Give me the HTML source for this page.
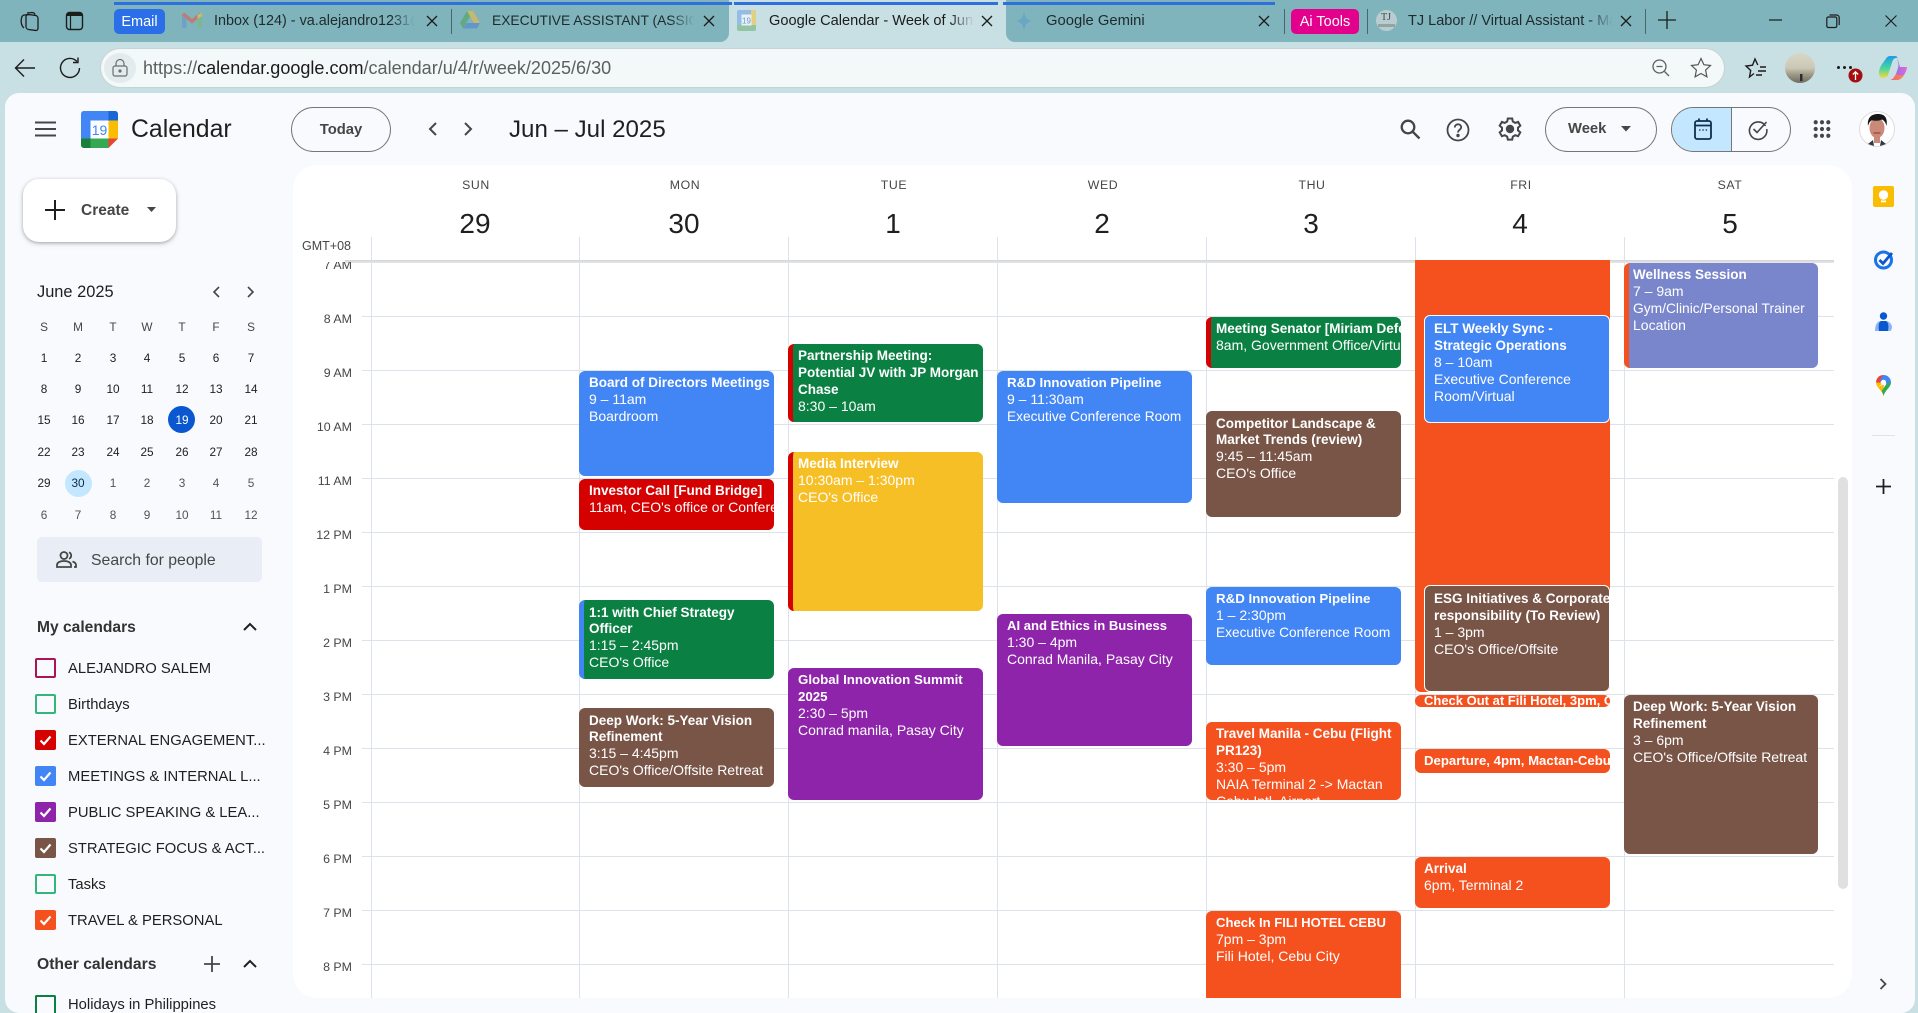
<!DOCTYPE html>
<html><head><meta charset="utf-8"><title>Google Calendar</title>
<style>
*{box-sizing:border-box}
html,body{margin:0;padding:0;width:1918px;height:1013px;overflow:hidden}
body{position:relative;background:#c8dfe3;font-family:"Liberation Sans",sans-serif;color:#1f1f1f}
.a{position:absolute;white-space:nowrap}
svg{position:absolute;overflow:visible}
.tab{font-size:14.8px;color:#1f2a2c;top:12px;line-height:18px;overflow:hidden}
.fade{-webkit-mask-image:linear-gradient(90deg,#000 88%,transparent);mask-image:linear-gradient(90deg,#000 88%,transparent)}
.sep{position:absolute;top:9px;width:1px;height:25px;background:#48666c}
.dow{position:absolute;top:178px;width:100px;text-align:center;font-size:12.3px;letter-spacing:.6px;color:#444746;line-height:15px}
.num{position:absolute;top:207px;width:100px;text-align:center;font-size:28px;color:#1f1f1f;line-height:34px}
.h{position:absolute;left:362px;width:1472px;height:1px;background:#dde3ea}
.v{position:absolute;top:237px;width:1px;height:761px;background:#dde3ea}
.tl{position:absolute;left:300px;width:52px;text-align:right;font-size:12.4px;color:#444746;line-height:14px}
.e{position:absolute;border-radius:6px;color:#fff;font-size:14px;line-height:17px;padding:3px 0 0 10px;white-space:nowrap;overflow:hidden}
.e b{display:block;font-size:13.5px;font-weight:bold}
.s{padding-top:5px}
.s b{line-height:16px}
.m{position:absolute;width:34px;text-align:center;font-size:11.8px;line-height:14px;color:#1f1f1f}
.g{color:#50535a}
.d{color:#444746;font-weight:normal;font-size:11.8px}
.li{position:absolute;left:68px;font-size:14.8px;line-height:18px;color:#1f1f1f;white-space:nowrap}
.cb{position:absolute;left:35px;width:21px;height:20px;border-radius:2px;border:2px solid}
.cb svg{left:0;top:0}
.pill{position:absolute;top:107px;height:45px;border:1px solid #747775;border-radius:23px}
</style></head>
<body>
<!-- tab strip -->
<div class="a" style="left:0;top:0;width:729px;height:42px;background:#7fb4bd;border-radius:0 0 9px 0"></div>
<div class="a" style="left:1006px;top:0;width:912px;height:42px;background:#7fb4bd;border-radius:0 0 0 9px"></div>
<div class="a" style="left:114px;top:2px;width:618px;height:3px;background:#2f6fdc"></div>
<div class="a" style="left:734px;top:2px;width:264px;height:3px;background:#2f6fdc"></div>
<div class="a" style="left:1003px;top:2px;width:272px;height:3px;background:#2f6fdc"></div>

<svg style="left:18px;top:9px" width="24" height="24" viewBox="0 0 24 24" fill="none" stroke="#1c1c1c" stroke-width="1.3"><rect x="8" y="6" width="12" height="15" rx="2.5" transform="skewY(8) translate(0 -2)"/><path d="M6 19C3.5 17 2.5 13 3.5 9c.5-2 1.500-3 3-3l6-.500M9 4l5-.5c1.500 0 2.500.5 3 2"/></svg>
<svg style="left:65px;top:11px" width="20" height="20" viewBox="0 0 20 20" fill="none"><rect x="1.500" y="1.500" width="16" height="17" rx="3" stroke="#1c1c1c" stroke-width="1.400"/><path d="M1.500 5V4.500c0-1.700 1.300-3 3-3h10c1.700 0 3 1.300 3 3V5z" fill="#1c1c1c"/><path d="M5.500 5v13" stroke="#1c1c1c" stroke-width="1.200"/></svg>

<div class="a" style="left:114px;top:9px;width:51px;height:25px;background:#2b6fe8;border-radius:5px;color:#fff;font-size:14.500px;line-height:26px;text-align:center">Email</div>
<svg style="left:182px;top:13px;opacity:.85" width="20" height="15" viewBox="0 0 20 15"><path d="M0 3v10.500c0 .8.700 1.500 1.500 1.500H4.500V6z" fill="#6ba0c8"/><path d="M15.500 6v9h3c.8 0 1.500-.7 1.500-1.500V3z" fill="#7cb88a"/><path d="M0 2.500C0 .5 2 -.5 3.500.5L10 6l6.500-5.500C18-.5 20 .5 20 2.500L15.500 6 10 10.500 4.500 6z" fill="#c9736a"/><path d="M15.500 1.500 20 0v3l-4.500 3z" fill="#cfc067"/></svg>
<div class="a tab fade" style="left:214px;width:201px;font-size:14.4px">Inbox (124) - va.alejandro1231@gmail</div>
<svg style="left:426px;top:15px" width="12" height="12" viewBox="0 0 12 12" stroke="#1c1c1c" stroke-width="1.300"><path d="M1 1l10 10M11 1 1 11"/></svg>
<div class="sep" style="left:451px"></div>
<svg style="left:460px;top:11px;opacity:.85" width="20" height="18" viewBox="0 0 20 18"><path d="M7 0h6l7 12h-6z" fill="#d5b95c"/><path d="M7 0 0 12l3 5.500L10 5.500z" fill="#5fa877"/><path d="M6.500 12H20l-3 5.500H3z" fill="#5f93cf"/></svg>
<div class="a tab fade" style="left:492px;width:203px;font-size:13.8px">EXECUTIVE ASSISTANT (ASSIGNMENT</div>
<svg style="left:703px;top:15px" width="12" height="12" viewBox="0 0 12 12" stroke="#1c1c1c" stroke-width="1.300"><path d="M1 1l10 10M11 1 1 11"/></svg>

<svg style="left:737px;top:10px;opacity:.85" width="19" height="21" viewBox="0 0 19 21"><rect width="19" height="21" rx="2" fill="#8db6e6"/><path d="M14 0h3c1.100 0 2 .9 2 2v13h-5z" fill="#e8cd71"/><path d="M0 15h19v4c0 1.100-.9 2-2 2H2c-1.100 0-2-.9-2-2z" fill="#8cc09c"/><rect x="4.500" y="4.500" width="10" height="11" fill="#eef5f8"/><text x="9.500" y="13.500" font-size="8" text-anchor="middle" fill="#5b8fd6" font-family="Liberation Sans,sans-serif">19</text></svg>
<div class="a tab fade" style="left:769px;width:205px;color:#1c1c1c;font-size:14.6px">Google Calendar - Week of June 29</div>
<svg style="left:981px;top:15px" width="12" height="12" viewBox="0 0 12 12" stroke="#1c1c1c" stroke-width="1.300"><path d="M1 1l10 10M11 1 1 11"/></svg>

<svg style="left:1016px;top:11px;opacity:.6" width="16" height="20" viewBox="0 0 18 24"><path d="M9 0c.8 6.500 3 10.500 9 12-6 1.500-8.200 5.500-9 12-.8-6.500-3-10.500-9-12 6-1.500 8.200-5.500 9-12z" fill="#5f9ecb"/></svg>
<div class="a tab" style="left:1046px">Google Gemini</div>
<svg style="left:1258px;top:15px" width="12" height="12" viewBox="0 0 12 12" stroke="#1c1c1c" stroke-width="1.300"><path d="M1 1l10 10M11 1 1 11"/></svg>
<div class="sep" style="left:1284px"></div>
<div class="a" style="left:1291px;top:9px;width:68px;height:25px;background:#e3008c;border-radius:5px;color:#fff;font-size:14.500px;line-height:26px;text-align:center">Ai Tools</div>
<div class="sep" style="left:1367px"></div>
<div class="a" style="left:1376px;top:10px;width:21px;height:21px;border-radius:50%;background:#b9cdd0"></div>
<div class="a" style="left:1381px;top:12px;font:10px 'Liberation Serif',serif;color:#3c4a4c">TJ</div>
<div class="a" style="left:1378px;top:24px;width:17px;height:3px;background:#8fa6a3"></div>
<div class="a tab fade" style="left:1408px;width:205px;font-size:14.5px">TJ Labor // Virtual Assistant - Manila</div>
<svg style="left:1620px;top:15px" width="12" height="12" viewBox="0 0 12 12" stroke="#1c1c1c" stroke-width="1.300"><path d="M1 1l10 10M11 1 1 11"/></svg>
<div class="sep" style="left:1645px"></div>
<svg style="left:1658px;top:11px" width="18" height="18" viewBox="0 0 18 18" stroke="#1c1c1c" stroke-width="1.300"><path d="M9 0v18M0 9h18"/></svg>
<svg style="left:1769px;top:19px" width="13" height="3"><path d="M0 1h13" stroke="#1c1c1c" stroke-width="1.200"/></svg>
<svg style="left:1826px;top:14px" width="14" height="14" viewBox="0 0 14 14" fill="none" stroke="#1c1c1c" stroke-width="1.200"><rect x=".8" y="3" width="10" height="10.500" rx="1.500"/><path d="M3.500 1h7c1.500 0 2.700 1.200 2.700 2.700V11"/></svg>
<svg style="left:1885px;top:15px" width="12" height="12" viewBox="0 0 12 12" stroke="#1c1c1c" stroke-width="1.100"><path d="M.5.500l11 11M11.500.500l-11 11"/></svg>

<!-- toolbar -->
<svg style="left:14px;top:58px" width="22" height="20" viewBox="0 0 22 20" fill="none" stroke="#1c1c1c" stroke-width="1.400"><path d="M21 10H1.500M10 1.500 1.500 10l8.500 8.500"/></svg>
<svg style="left:59px;top:57px" width="22" height="22" viewBox="0 0 22 22" fill="none" stroke="#1c1c1c" stroke-width="1.400"><path d="M18 4.500A9.500 9.500 0 1 0 20.500 11"/><path d="M19 .5v5h-5"/></svg>
<div class="a" style="left:101px;top:49px;width:1623px;height:38px;background:#f3f8f8;border-radius:19px;box-shadow:0 0 0 1px #c6d4d6"></div>
<div class="a" style="left:104px;top:53px;width:32px;height:30px;background:#e4ebec;border-radius:50%"></div>
<svg style="left:112px;top:59px" width="16" height="18" viewBox="0 0 16 18" fill="none" stroke="#6a6f70" stroke-width="1.200"><rect x="1" y="7" width="14" height="10" rx="2"/><path d="M4 7V4.500a4 4 0 0 1 8 0V7"/><circle cx="8" cy="12" r="1" fill="#6a6f70"/></svg>
<div class="a" style="left:143px;top:58px;font-size:18.050px;line-height:20px;color:#5b5f60">https://<span style="color:#1c1c1c">calendar.google.com</span>/calendar/u/4/r/week/2025/6/30</div>
<svg style="left:1652px;top:59px" width="18" height="18" viewBox="0 0 18 18" fill="none" stroke="#5b5f60" stroke-width="1.300"><circle cx="7.500" cy="7.500" r="6.500"/><path d="M12.500 12.500 17 17M4.500 7.500h6"/></svg>
<svg style="left:1690px;top:57px" width="22" height="22" viewBox="0 0 22 22" fill="none" stroke="#555" stroke-width="1.200"><path d="m11 1.500 2.900 6.200 6.600.8-4.900 4.600 1.300 6.700L11 16.500l-5.900 3.300 1.300-6.700L1.500 8.500l6.600-.8z"/></svg>
<svg style="left:1745px;top:57px" width="22" height="22" viewBox="0 0 22 22" fill="none" stroke="#1c1c1c" stroke-width="1.400"><path d="M9 16.500 4.500 20l1.200-6.500L1 9l6.500-.8L10 2l2.800 6M15 10h6M13 14h8M11 18h6"/></svg>
<svg style="left:1785px;top:53px" width="30" height="30" viewBox="0 0 30 30"><defs><linearGradient id="pf" x1="0" y1="0" x2="0" y2="1"><stop offset="0" stop-color="#d8d6c6"/><stop offset=".5" stop-color="#cbc8b6"/><stop offset=".7" stop-color="#a19c8a"/><stop offset="1" stop-color="#6d6a5e"/></linearGradient></defs><circle cx="15" cy="15" r="15" fill="url(#pf)"/><rect x="15" y="21" width="2.500" height="7" fill="#2c2c2c"/></svg>
<div class="a" style="left:1837px;top:66px;width:3px;height:3px;border-radius:50%;background:#1c1c1c;box-shadow:6px 0 #1c1c1c,12px 0 #1c1c1c"></div>
<svg style="left:1848px;top:68px" width="15" height="15" viewBox="0 0 15 15"><circle cx="7.500" cy="7.500" r="7" fill="#a50e0e"/><path d="M7.500 12V4M4.800 6.500l2.700-2.700 2.700 2.700" stroke="#fff" stroke-width="1.300" fill="none"/></svg>
<svg style="left:1879px;top:55px" width="28" height="26" viewBox="0 0 28 26"><defs><linearGradient id="c1" x1="0" y1="0" x2="0" y2="1"><stop offset="0" stop-color="#1f9be8"/><stop offset=".55" stop-color="#45d6a0"/><stop offset="1" stop-color="#f7d93b"/></linearGradient><linearGradient id="c2" x1="0" y1="0" x2="1" y2="0"><stop offset="0" stop-color="#7a6cf0"/><stop offset="1" stop-color="#e26ad8"/></linearGradient><linearGradient id="c3" x1="0" y1="0" x2="1" y2="0"><stop offset="0" stop-color="#f25a90"/><stop offset="1" stop-color="#f7903a"/></linearGradient></defs><path d="M18 2 21 12h7c0 2-1 5-3 8-2 3-4 5-7 5h-6c2 0 3-1 4-3l3-9c1-3 0-6-1-11z" fill="url(#c2)"/><path d="M10 25h8c3 0 5-2 7-5-3 1-6 0-8-1l-2 3c-1 2-3 3-5 3z" fill="url(#c3)"/><path d="M11 1h5c1.500 0 2 .5 2.500 2-2-.5-4 .5-5 3L9 20c-1 2-3 3-5 3-3 0-4-3-4-5C0 12 4 8 6 5c1.500-2.500 3-4 5-4z" fill="url(#c1)"/></svg>

<!-- app panel -->
<div class="a" style="left:5px;top:93px;width:1910px;height:920px;background:#f8fafd;border-radius:14px"></div>
<svg style="left:35px;top:121px" width="21" height="16" viewBox="0 0 21 16" stroke="#444746" stroke-width="2"><path d="M0 1.500h21M0 8h21M0 14.500h21"/></svg>
<svg style="left:81px;top:111px" width="37" height="37" viewBox="0 0 37 37"><path d="M27.500 0H3C1.300 0 0 1.300 0 3v24.500h9.500v-18h18z" fill="#4285f4"/><path d="M27.500 0v9.500H37V3c0-1.700-1.300-3-3-3z" fill="#1967d2"/><rect x="27.500" y="9.500" width="9.500" height="18" fill="#fbbc04"/><rect x="9.500" y="27.500" width="18" height="9.500" fill="#34a853"/><path d="M0 27.500V34c0 1.700 1.300 3 3 3h6.500v-9.500z" fill="#188038"/><path d="M27.500 27.500V37L37 27.500z" fill="#ea4335"/><rect x="9.500" y="9.500" width="18" height="18" fill="#fff"/><text x="18.500" y="24" font-size="14" text-anchor="middle" fill="#4285f4" font-family="Liberation Sans,sans-serif">19</text></svg>
<div class="a" style="left:131px;top:115px;font-size:24.800px;line-height:30px;color:#1f1f1f">Calendar</div>
<div class="pill" style="left:291px;width:100px;text-align:center;font-size:14.800px;font-weight:bold;line-height:44px;color:#444746">Today</div>
<svg style="left:428px;top:122px" width="9" height="14" viewBox="0 0 9 14" fill="none" stroke="#444746" stroke-width="2"><path d="M8 1 2 7l6 6"/></svg>
<svg style="left:464px;top:122px" width="9" height="14" viewBox="0 0 9 14" fill="none" stroke="#444746" stroke-width="2"><path d="m1 1 6 6-6 6"/></svg>
<div class="a" style="left:509px;top:115px;font-size:24.100px;line-height:30px;color:#1f1f1f">Jun – Jul 2025</div>

<svg style="left:1400px;top:119px" width="21" height="21" viewBox="0 0 21 21" fill="none" stroke="#444746" stroke-width="2.300"><circle cx="8" cy="8" r="6.300"/><path d="m12.500 12.500 7 7"/></svg>
<svg style="left:1446px;top:118px" width="24" height="24" viewBox="0 0 24 24" fill="none" stroke="#444746" stroke-width="1.800"><circle cx="12" cy="12" r="10.500"/><path d="M8.800 9.500c0-1.900 1.400-3.200 3.200-3.200s3.200 1.200 3.200 3c0 2.300-3.200 2.500-3.200 5.200"/><circle cx="12" cy="17.500" r=".8" fill="#444746"/></svg>
<svg style="left:1498px;top:117px" width="24" height="24" viewBox="0 0 24 24" fill="none" stroke="#444746" stroke-width="2"><path d="M9.800 1.500h4.400l.6 3 2.400 1.400 2.900-1 2.200 3.800-2.300 2 .0 2.700 2.300 2-2.200 3.800-2.900-1-2.400 1.400-.6 3H9.800l-.6-3-2.400-1.400-2.900 1-2.200-3.800 2.300-2v-2.700l-2.300-2 2.200-3.800 2.900 1 2.400-1.400z"/><circle cx="12" cy="12" r="3.200" fill="#444746"/></svg>
<div class="pill" style="left:1545px;width:112px;font-size:14.800px;font-weight:bold;line-height:42px;color:#444746;padding-left:22px">Week</div>
<svg style="left:1621px;top:126px" width="10" height="6"><path d="M0 0h10L5 5.500z" fill="#444746"/></svg>
<div class="pill" style="left:1671px;width:120px;overflow:hidden"><div style="position:absolute;left:0;top:0;width:60px;height:45px;background:#c2e7ff;border-right:1px solid #747775"></div></div>
<svg style="left:1694px;top:118px" width="18" height="22" viewBox="0 0 18 22" fill="none" stroke="#0f2f4d" stroke-width="1.800"><rect x="1" y="3" width="16" height="18" rx="2"/><path d="M1 7.500h16M5 .5v3M13 .5v3"/><path d="M5 12h1.500M8.300 12h1.500M11.600 12h1.500" stroke-width="1.200"/></svg>
<svg style="left:1748px;top:119px" width="20" height="20" viewBox="0 0 20 20" fill="none" stroke="#444746" stroke-width="1.600"><path d="M17.500 7A8.700 8.700 0 1 0 18.700 10"/><path d="m5.500 10 3.500 3.500L18.500 3"/></svg>
<svg style="left:1813px;top:120px" width="18" height="18" viewBox="0 0 20 20" fill="#444746"><circle cx="3" cy="2.500" r="2.300"/><circle cx="10" cy="2.500" r="2.300"/><circle cx="17" cy="2.500" r="2.300"/><circle cx="3" cy="10" r="2.300"/><circle cx="10" cy="10" r="2.300"/><circle cx="17" cy="10" r="2.300"/><circle cx="3" cy="17.500" r="2.300"/><circle cx="10" cy="17.500" r="2.300"/><circle cx="17" cy="17.500" r="2.300"/></svg>
<svg style="left:1859px;top:111px" width="36" height="36" viewBox="0 0 36 36"><circle cx="18" cy="18" r="17.500" fill="#fff" stroke="#ddd"/><path d="M9 33l5-4 1 6zM27 33l-5-4-1 6z" fill="#2d3a45"/><ellipse cx="18" cy="17" rx="7.500" ry="10" fill="#c98b78"/><rect x="15" y="24" width="6" height="8" fill="#c98b78"/><path d="M9 15C8 6 13 3 19 3s10 3 8.500 12c-1-4-2.500-5.500-4.500-6.500-3 1.500-7 1.500-10 .8-2 1-3 2.500-4 5.700z" fill="#161616"/><path d="M14.500 22h7" stroke="#a83a3a" stroke-width="1.200"/></svg>

<!-- Create -->
<div class="a" style="left:23px;top:179px;width:153px;height:63px;background:#fff;border-radius:16px;box-shadow:0 1px 3px rgba(60,64,67,.35),0 2px 6px rgba(60,64,67,.15)"></div>
<svg style="left:45px;top:200px" width="20" height="20" viewBox="0 0 20 20" stroke="#1f1f1f" stroke-width="2"><path d="M10 0v20M0 10h20"/></svg>
<div class="a" style="left:81px;top:201px;font-size:15.500px;font-weight:bold;line-height:19px;color:#444746">Create</div>
<svg style="left:147px;top:207px" width="9" height="5"><path d="M0 0h9L4.500 5z" fill="#444746"/></svg>

<!-- mini calendar -->
<div class="a" style="left:37px;top:282px;font-size:16.400px;line-height:20px;color:#1f1f1f">June 2025</div>
<svg style="left:212px;top:286px" width="8" height="12" viewBox="0 0 8 12" fill="none" stroke="#444746" stroke-width="1.600"><path d="M7 1 2 6l5 5"/></svg>
<svg style="left:247px;top:286px" width="8" height="12" viewBox="0 0 8 12" fill="none" stroke="#444746" stroke-width="1.600"><path d="m1 1 5 5-5 5"/></svg>
<div class="a" style="left:168px;top:406px;width:27px;height:27px;border-radius:50%;background:#0b57d0"></div>
<div class="a" style="left:65px;top:470px;width:27px;height:27px;border-radius:50%;background:#c2e7ff"></div>
<div style="position:absolute;left:0;top:0">
<div class="m d" style="left:27px;top:320px">S</div><div class="m d" style="left:61px;top:320px">M</div><div class="m d" style="left:96px;top:320px">T</div><div class="m d" style="left:130px;top:320px">W</div><div class="m d" style="left:165px;top:320px">T</div><div class="m d" style="left:199px;top:320px">F</div><div class="m d" style="left:234px;top:320px">S</div>
<div class="m" style="left:27px;top:351px">1</div><div class="m" style="left:61px;top:351px">2</div><div class="m" style="left:96px;top:351px">3</div><div class="m" style="left:130px;top:351px">4</div><div class="m" style="left:165px;top:351px">5</div><div class="m" style="left:199px;top:351px">6</div><div class="m" style="left:234px;top:351px">7</div>
<div class="m" style="left:27px;top:382px">8</div><div class="m" style="left:61px;top:382px">9</div><div class="m" style="left:96px;top:382px">10</div><div class="m" style="left:130px;top:382px">11</div><div class="m" style="left:165px;top:382px">12</div><div class="m" style="left:199px;top:382px">13</div><div class="m" style="left:234px;top:382px">14</div>
<div class="m" style="left:27px;top:413px">15</div><div class="m" style="left:61px;top:413px">16</div><div class="m" style="left:96px;top:413px">17</div><div class="m" style="left:130px;top:413px">18</div><div class="m" style="left:165px;top:413px;color:#fff">19</div><div class="m" style="left:199px;top:413px">20</div><div class="m" style="left:234px;top:413px">21</div>
<div class="m" style="left:27px;top:445px">22</div><div class="m" style="left:61px;top:445px">23</div><div class="m" style="left:96px;top:445px">24</div><div class="m" style="left:130px;top:445px">25</div><div class="m" style="left:165px;top:445px">26</div><div class="m" style="left:199px;top:445px">27</div><div class="m" style="left:234px;top:445px">28</div>
<div class="m" style="left:27px;top:476px">29</div><div class="m" style="left:61px;top:476px;color:#0a2a4a">30</div><div class="m g" style="left:96px;top:476px">1</div><div class="m g" style="left:130px;top:476px">2</div><div class="m g" style="left:165px;top:476px">3</div><div class="m g" style="left:199px;top:476px">4</div><div class="m g" style="left:234px;top:476px">5</div>
<div class="m g" style="left:27px;top:508px">6</div><div class="m g" style="left:61px;top:508px">7</div><div class="m g" style="left:96px;top:508px">8</div><div class="m g" style="left:130px;top:508px">9</div><div class="m g" style="left:165px;top:508px">10</div><div class="m g" style="left:199px;top:508px">11</div><div class="m g" style="left:234px;top:508px">12</div>
</div>
<div class="a" style="left:37px;top:537px;width:225px;height:45px;background:#e9eef6;border-radius:5px"></div>
<svg style="left:56px;top:551px" width="21" height="17" viewBox="0 0 21 17" fill="none" stroke="#444746" stroke-width="1.800"><circle cx="8" cy="4.500" r="3.500"/><path d="M1 16v-2c0-2.500 3-4 7-4s7 1.500 7 4v2zM13 1.300a3.500 3.500 0 0 1 0 6.500M16.500 10.500c2 .7 3.500 2 3.500 3.500v2h-2"/></svg>
<div class="a" style="left:91px;top:551px;font-size:15.800px;line-height:19px;color:#444746">Search for people</div>

<div class="a" style="left:37px;top:619px;font-size:15.600px;font-weight:bold;line-height:18px;color:#333">My calendars</div>
<svg style="left:243px;top:622px" width="14" height="9" viewBox="0 0 14 9" fill="none" stroke="#1f1f1f" stroke-width="2"><path d="m1 8 6-6 6 6"/></svg>

<div class="cb" style="top:658px;border-color:#ad1457"></div><div class="li" style="top:660px">ALEJANDRO SALEM</div>
<div class="cb" style="top:694px;border-color:#33b679"></div><div class="li" style="top:696px">Birthdays</div>
<div class="cb" style="top:730px;border-color:#d50000;background:#d50000"><svg width="17" height="16" viewBox="0 0 17 16" fill="none" stroke="#fff" stroke-width="2.200"><path d="m3.500 8.500 3.500 3.500 6.500-7.500"/></svg></div><div class="li" style="top:732px">EXTERNAL ENGAGEMENT...</div>
<div class="cb" style="top:766px;border-color:#4285f4;background:#4285f4"><svg width="17" height="16" viewBox="0 0 17 16" fill="none" stroke="#fff" stroke-width="2.200"><path d="m3.500 8.500 3.500 3.500 6.500-7.500"/></svg></div><div class="li" style="top:768px">MEETINGS &amp; INTERNAL L...</div>
<div class="cb" style="top:802px;border-color:#8e24aa;background:#8e24aa"><svg width="17" height="16" viewBox="0 0 17 16" fill="none" stroke="#fff" stroke-width="2.200"><path d="m3.500 8.500 3.500 3.500 6.500-7.500"/></svg></div><div class="li" style="top:804px">PUBLIC SPEAKING &amp; LEA...</div>
<div class="cb" style="top:838px;border-color:#795548;background:#795548"><svg width="17" height="16" viewBox="0 0 17 16" fill="none" stroke="#fff" stroke-width="2.200"><path d="m3.500 8.500 3.500 3.500 6.500-7.500"/></svg></div><div class="li" style="top:840px">STRATEGIC FOCUS &amp; ACT...</div>
<div class="cb" style="top:874px;border-color:#33b679"></div><div class="li" style="top:876px">Tasks</div>
<div class="cb" style="top:910px;border-color:#f4511e;background:#f4511e"><svg width="17" height="16" viewBox="0 0 17 16" fill="none" stroke="#fff" stroke-width="2.200"><path d="m3.500 8.500 3.500 3.500 6.500-7.500"/></svg></div><div class="li" style="top:912px">TRAVEL &amp; PERSONAL</div>

<div class="a" style="left:37px;top:956px;font-size:15.700px;font-weight:bold;line-height:18px;color:#333">Other calendars</div>
<svg style="left:204px;top:956px" width="16" height="16" viewBox="0 0 16 16" stroke="#444746" stroke-width="1.800"><path d="M8 0v16M0 8h16"/></svg>
<svg style="left:243px;top:959px" width="14" height="9" viewBox="0 0 14 9" fill="none" stroke="#1f1f1f" stroke-width="2"><path d="m1 8 6-6 6 6"/></svg>
<div class="a" style="left:35px;top:995px;width:21px;height:18px;border:2px solid #0b8043;border-bottom:0;border-radius:2px 2px 0 0"></div>
<div class="li" style="top:996px">Holidays in Philippines</div>

<!-- grid panel -->
<div class="a" style="left:293px;top:165px;width:1559px;height:833px;background:#fff;border-radius:24px"></div>
<div class="dow" style="left:426px">SUN</div><div class="dow" style="left:635px">MON</div><div class="dow" style="left:844px">TUE</div><div class="dow" style="left:1053px">WED</div><div class="dow" style="left:1262px">THU</div><div class="dow" style="left:1471px">FRI</div><div class="dow" style="left:1680px">SAT</div>
<div class="num" style="left:425px">29</div><div class="num" style="left:634px">30</div><div class="num" style="left:843px">1</div><div class="num" style="left:1052px">2</div><div class="num" style="left:1261px">3</div><div class="num" style="left:1470px">4</div><div class="num" style="left:1680px">5</div>
<div class="a" style="left:302px;top:239px;font-size:12.500px;line-height:15px;color:#444746">GMT+08</div>

<div class="v" style="left:371px"></div><div class="v" style="left:579px"></div><div class="v" style="left:788px"></div><div class="v" style="left:997px"></div><div class="v" style="left:1206px"></div><div class="v" style="left:1415px"></div><div class="v" style="left:1624px"></div>
<div class="h" style="top:262px"></div><div class="h" style="top:316px"></div><div class="h" style="top:370px"></div><div class="h" style="top:424px"></div><div class="h" style="top:478px"></div><div class="h" style="top:532px"></div><div class="h" style="top:586px"></div><div class="h" style="top:640px"></div><div class="h" style="top:694px"></div><div class="h" style="top:748px"></div><div class="h" style="top:802px"></div><div class="h" style="top:856px"></div><div class="h" style="top:910px"></div><div class="h" style="top:964px"></div>
<div class="a" style="left:345px;top:260px;width:1489px;height:3px;background:linear-gradient(#d2d4d6,#e6e8ea)"></div>

<div class="a" style="left:300px;top:262px;width:52px;height:10px;overflow:hidden"><div class="tl" style="left:0;top:-4px">7 AM</div></div>
<div class="tl" style="top:312px">8 AM</div><div class="tl" style="top:366px">9 AM</div><div class="tl" style="top:420px">10 AM</div><div class="tl" style="top:474px">11 AM</div><div class="tl" style="top:528px">12 PM</div><div class="tl" style="top:582px">1 PM</div><div class="tl" style="top:636px">2 PM</div><div class="tl" style="top:690px">3 PM</div><div class="tl" style="top:744px">4 PM</div><div class="tl" style="top:798px">5 PM</div><div class="tl" style="top:852px">6 PM</div><div class="tl" style="top:906px">7 PM</div><div class="tl" style="top:960px">8 PM</div>

<!-- Monday -->
<div class="e" style="left:579px;top:371px;width:195px;height:105px;background:#4285f4"><b>Board of Directors Meetings</b>9 – 11am<br>Boardroom</div>
<div class="e" style="left:579px;top:479px;width:195px;height:51px;background:#d50000"><b>Investor Call [Fund Bridge]</b>11am, CEO's office or Conference</div>
<div class="e s" style="left:579px;top:600px;width:195px;height:79px;background:#0b8043;border-left:5px solid #4285f4;padding-left:5px"><b>1:1 with Chief Strategy<br>Officer</b>1:15 – 2:45pm<br>CEO's Office</div>
<div class="e s" style="left:579px;top:708px;width:195px;height:79px;background:#795548"><b>Deep Work: 5-Year Vision<br>Refinement</b>3:15 – 4:45pm<br>CEO's Office/Offsite Retreat</div>
<!-- Tuesday -->
<div class="e" style="left:788px;top:344px;width:195px;height:78px;background:#0b8043;border-left:5px solid #d50000;padding-left:5px"><b>Partnership Meeting:<br>Potential JV with JP Morgan<br>Chase</b>8:30 – 10am</div>
<div class="e" style="left:788px;top:452px;width:195px;height:159px;background:#f6bf26;border-left:5px solid #d50000;padding-left:5px"><b>Media Interview</b>10:30am – 1:30pm<br>CEO's Office</div>
<div class="e" style="left:788px;top:668px;width:195px;height:132px;background:#8e24aa"><b style="font-size:13.3px">Global Innovation Summit<br>2025</b>2:30 – 5pm<br>Conrad manila, Pasay City</div>
<!-- Wednesday -->
<div class="e" style="left:997px;top:371px;width:195px;height:132px;background:#4285f4"><b style="font-size:13.3px">R&amp;D Innovation Pipeline</b>9 – 11:30am<br><span style="font-size:13.7px">Executive Conference Room</span></div>
<div class="e" style="left:997px;top:614px;width:195px;height:132px;background:#8e24aa"><b style="font-size:13.1px">AI and Ethics in Business</b>1:30 – 4pm<br>Conrad Manila, Pasay City</div>
<!-- Thursday -->
<div class="e" style="left:1206px;top:317px;width:195px;height:51px;background:#0b8043;border-left:5px solid #d50000;padding-left:5px"><b>Meeting Senator [Miriam Defensor]</b>8am, Government Office/Virtual</div>
<div class="e s" style="left:1206px;top:411px;width:195px;height:106px;background:#795548"><b>Competitor Landscape &amp;<br>Market Trends (review)</b>9:45 – 11:45am<br>CEO's Office</div>
<div class="e" style="left:1206px;top:587px;width:195px;height:78px;background:#4285f4"><b style="font-size:13.3px">R&amp;D Innovation Pipeline</b>1 – 2:30pm<br><span style="font-size:13.7px">Executive Conference Room</span></div>
<div class="e" style="left:1206px;top:722px;width:195px;height:78px;background:#f4511e"><b>Travel Manila - Cebu (Flight<br>PR123)</b>3:30 – 5pm<br>NAIA Terminal 2 -&gt; Mactan<br>Cebu Intl. Airport</div>
<div class="e" style="left:1206px;top:911px;width:195px;height:87px;background:#f4511e;border-radius:6px 6px 0 0"><b style="font-size:13.1px">Check In FILI HOTEL CEBU</b>7pm – 3pm<br>Fili Hotel, Cebu City</div>
<!-- Friday -->
<div class="e" style="left:1415px;top:260px;width:195px;height:432px;background:#f4511e;border-radius:0 0 6px 6px"></div>
<div class="e" style="left:1424px;top:315px;width:186px;height:108px;background:#4285f4;border:1px solid #fff;padding:4px 0 0 9px"><b>ELT Weekly Sync -<br>Strategic Operations</b>8 – 10am<br>Executive Conference<br>Room/Virtual</div>
<div class="e" style="left:1424px;top:585px;width:186px;height:107px;background:#795548;border:1px solid #fff;padding:4px 0 0 9px"><b>ESG Initiatives &amp; Corporate<br>responsibility (To Review)</b>1 – 3pm<br>CEO's Office/Offsite</div>
<div class="e" style="left:1415px;top:695px;width:195px;height:12px;background:#f4511e;padding:0 0 0 9px;line-height:11px"><b style="line-height:11px;font-size:13px">Check Out at Fili Hotel, 3pm, Cebu</b></div>
<div class="e" style="left:1415px;top:749px;width:195px;height:24px;background:#f4511e;padding:3px 0 0 9px"><b style="font-size:13.2px">Departure, 4pm, Mactan-Cebu</b></div>
<div class="e" style="left:1415px;top:857px;width:195px;height:51px;background:#f4511e;padding-left:9px"><b>Arrival</b>6pm, Terminal 2</div>
<!-- Saturday -->
<div class="e" style="left:1624px;top:263px;width:194px;height:105px;background:#7986cb;border-left:5px solid #f4511e;padding-left:4px"><b>Wellness Session</b>7 – 9am<br><span style="font-size:13.8px">Gym/Clinic/Personal Trainer</span><br>Location</div>
<div class="e" style="left:1624px;top:695px;width:194px;height:159px;background:#795548;padding-left:9px"><b>Deep Work: 5-Year Vision<br>Refinement</b>3 – 6pm<br>CEO's Office/Offsite Retreat</div>

<div class="a" style="left:1838px;top:477px;width:10px;height:412px;background:#e0e0e0;border-radius:5px"></div>

<!-- right rail -->
<svg style="left:1873px;top:186px" width="21" height="21" viewBox="0 0 21 21"><rect width="21" height="21" rx="2" fill="#fbbc04"/><circle cx="10.500" cy="9" r="4.700" fill="#fff"/><rect x="8" y="14.500" width="5" height="1.800" fill="#fff"/></svg>
<svg style="left:1873px;top:248px" width="22" height="22" viewBox="0 0 22 22" fill="none"><circle cx="10.500" cy="12" r="8" stroke="#1a73e8" stroke-width="3"/><path d="m6.500 12 3.500 3.500L19 5" stroke="#0b57d0" stroke-width="2.800"/></svg>
<svg style="left:1875px;top:312px" width="17" height="20" viewBox="0 0 17 20"><circle cx="8.500" cy="4" r="3.700" fill="#0b57d0"/><path d="M0 19c0-6 2-9 5-10h7c3 1 5 4 5 6 0 2-1 4-2 4z" fill="#8ab4f8"/><path d="M4 19c-1-6 0-9 2-10h5c2 1 3 4 2 10z" fill="#0b57d0"/></svg>
<svg style="left:1876px;top:375px" width="15" height="21" viewBox="0 0 15 21"><path d="M7.500 0C3.400 0 0 3.300 0 7.400l3.500 1.300L7.500 3z" fill="#ea4335"/><path d="M7.500 0 3.500 5 11 9l4-1.600C15 3.300 11.600 0 7.500 0z" fill="#4285f4"/><path d="M0 7.400c0 1.600.8 3.300 2 5.100L7 8z" fill="#fbbc04"/><path d="M2 12.500C3.600 14.500 6 16.500 7.500 21l.3-12z" fill="#fbbc04"/><path d="M15 7.400c0 2-1 3.700-2.500 5.600-2 2.400-4 4.500-5 8-.3-2-1-3.500-1.800-5L11 8z" fill="#34a853"/><circle cx="7.500" cy="7.400" r="2.600" fill="#fff"/></svg>
<div class="a" style="left:1872px;top:435px;width:23px;height:1px;background:#dde3ea"></div>
<svg style="left:1876px;top:479px" width="15" height="15" viewBox="0 0 15 15" stroke="#1f1f1f" stroke-width="1.800"><path d="M7.500 0v15M0 7.500h15"/></svg>
<svg style="left:1879px;top:978px" width="8" height="12" viewBox="0 0 8 12" fill="none" stroke="#444746" stroke-width="1.800"><path d="m1.500 1 5 5-5 5"/></svg>
</body></html>
